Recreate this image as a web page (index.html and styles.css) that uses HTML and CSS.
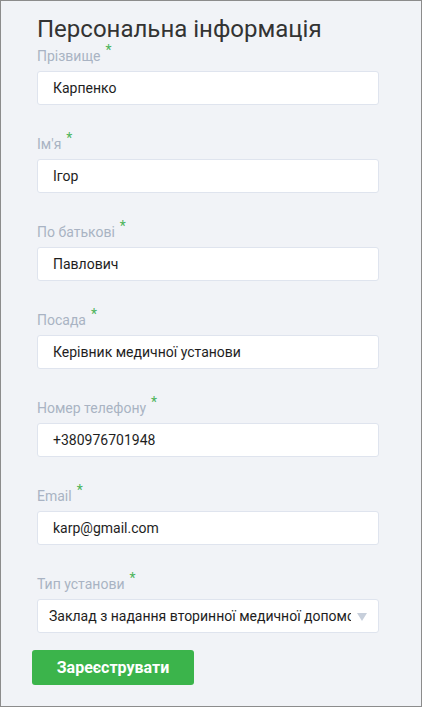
FILE: index.html
```html
<!DOCTYPE html>
<html lang="uk">
<head>
<meta charset="utf-8">
<title>Персональна інформація</title>
<link rel="stylesheet" href="styles.css">
</head>
<body>
<div class="page">
  <h1 class="title">Персональна інформація</h1>
  <form class="form">
    <div class="field">
      <label class="label">Прізвище<span class="req">*</span></label>
      <div class="input">Карпенко</div>
    </div>
    <div class="field">
      <label class="label">Ім'я<span class="req">*</span></label>
      <div class="input">Ігор</div>
    </div>
    <div class="field">
      <label class="label">По батькові<span class="req">*</span></label>
      <div class="input">Павлович</div>
    </div>
    <div class="field">
      <label class="label">Посада<span class="req">*</span></label>
      <div class="input">Керівник медичної установи</div>
    </div>
    <div class="field">
      <label class="label">Номер телефону<span class="req">*</span></label>
      <div class="input">+380976701948</div>
    </div>
    <div class="field">
      <label class="label">Email<span class="req">*</span></label>
      <div class="input">karp@gmail.com</div>
    </div>
    <div class="field field-last">
      <label class="label">Тип установи<span class="req">*</span></label>
      <div class="input select">
        <span class="select-text">Заклад з надання вторинної медичної допомоги</span>
        <span class="arrow"></span>
      </div>
    </div>
    <button type="button" class="btn">Зареєструвати</button>
  </form>
</div>
</body>
</html>
```
FILE: styles.css
```css
* { box-sizing: border-box; }
html, body { margin: 0; padding: 0; }
body {
  font-family: Roboto, "Noto Sans", "Liberation Sans", sans-serif;
  background: #ffffff;
}
.page {
  width: 422px;
  height: 707px;
  border: 1px solid #8c8c8c;
  background: #f1f3f7;
  padding: 14px 42px 0 36px;
}
.title {
  margin: 0 0 3px 0;
  font-size: 24px;
  line-height: 28px;
  font-weight: 400;
  color: #333333;
}
.form { margin: 0; }
.field {
  display: flex;
  flex-direction: column;
  margin-bottom: 29px;
}
.field-last { margin-bottom: 17px; }
.label {
  display: block;
  font-size: 14px;
  line-height: 20px;
  color: #a9b3c3;
  margin-bottom: 5px;
}
.req {
  color: #4cb45a;
  margin-left: 5px;
  font-size: 14px;
  vertical-align: 6px;
  line-height: 0;
}
.input {
  height: 34px;
  background: #ffffff;
  border: 1px solid #dfe4ee;
  border-radius: 3px;
  padding: 0 15px;
  font-size: 14px;
  line-height: 32px;
  color: #1e1e1e;
  white-space: nowrap;
}
.select {
  display: flex;
  align-items: center;
  padding: 0 11px 0 11px;
}
.select-text {
  flex: 1;
  overflow: hidden;
  white-space: nowrap;
}
.arrow {
  width: 0;
  height: 0;
  border-left: 5px solid transparent;
  border-right: 5px solid transparent;
  border-top: 8px solid #c7cfdb;
  margin-left: 6px;
  margin-top: 2px;
}
.btn {
  display: block;
  margin-left: -5px;
  width: 162px;
  height: 35px;
  background: #3bb44b;
  border: none;
  border-radius: 3px;
  color: #ffffff;
  font-family: Roboto, "Noto Sans", "Liberation Sans", sans-serif;
  font-size: 16px;
  font-weight: 700;
  padding: 0;
}
```
